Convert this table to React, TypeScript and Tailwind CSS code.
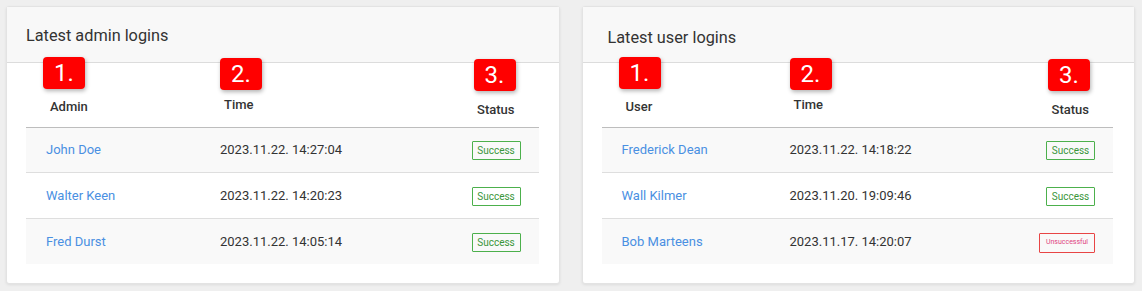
import React from "react";

type Row = { name: string; time: string; ok: boolean };

const adminRows: Row[] = [
  { name: "John Doe", time: "2023.11.22. 14:27:04", ok: true },
  { name: "Walter Keen", time: "2023.11.22. 14:20:23", ok: true },
  { name: "Fred Durst", time: "2023.11.22. 14:05:14", ok: true },
];

const userRows: Row[] = [
  { name: "Frederick Dean", time: "2023.11.22. 14:18:22", ok: true },
  { name: "Wall Kilmer", time: "2023.11.20. 19:09:46", ok: true },
  { name: "Bob Marteens", time: "2023.11.17. 14:20:07", ok: false },
];

function Marker({ n }: { n: number }) {
  return (
    <div className="w-[42px] h-[32px] rounded-[4px] bg-[#ff0000] text-white text-[24px] font-normal leading-none flex items-center justify-center shadow-[1px_2px_4px_rgba(0,0,0,0.3)]">
      {n}.
    </div>
  );
}

function StatusBadge({ ok }: { ok: boolean }) {
  if (ok) {
    return (
      <span className="inline-flex items-center justify-center w-[49px] h-[19px] border border-[#4cb04c] text-[#3a963a] text-[10px] rounded-[1px]">
        Success
      </span>
    );
  }
  return (
    <span className="inline-flex items-center justify-center w-[56px] h-[20px] border border-[#e84545] text-[#e0447f] text-[7px] rounded-[1px]">
      Unsuccessful
    </span>
  );
}

function LoginCard({
  title,
  firstCol,
  rows,
  timeCol,
  titleClass,
  bodyPad,
}: {
  title: string;
  firstCol: string;
  rows: Row[];
  timeCol: string;
  titleClass: string;
  bodyPad: string;
}) {
  return (
    <div className="flex-1 bg-white rounded-[3px] border border-[#e3e3e3] shadow-[0_1px_3px_rgba(0,0,0,0.08)]">
      {/* Header */}
      <div className="h-[56px] bg-[#f8f8f8] border-b border-[#dcdcdc]">
        <h2 className={`text-[16.3px] text-[#333] font-normal ${titleClass}`}>{title}</h2>
      </div>

      <div className={`${bodyPad} pb-5`}>
        {/* Table header */}
        <div className={`grid ${timeCol} h-[65px] border-b border-[#bdbdbd] text-[13px] font-medium text-[#333]`}>
          <div className="relative pl-6 pt-[34px]">
            <div className="absolute left-[17px] -top-[6px]">
              <Marker n={1} />
            </div>
            {firstCol}
          </div>
          <div className="relative pl-1 pt-[32px]">
            <div className="absolute left-0 -top-[5px]">
              <Marker n={2} />
            </div>
            Time
          </div>
          <div className="relative pr-6 pt-[37px] text-right">
            <div className="absolute right-[23px] -top-[4px]">
              <Marker n={3} />
            </div>
            Status
          </div>
        </div>

        {/* Rows */}
        {rows.map((r, i) => (
          <div
            key={r.name}
            className={`grid ${timeCol} items-center text-[13px] ${
              i % 2 === 0 ? "bg-[#f9f9f9]" : "bg-white"
            } ${i > 0 ? "h-[46px] border-t border-[#dedede]" : "h-[44px]"}`}
          >
            <div className="pl-5 text-[#4a90e2]">{r.name}</div>
            <div className="text-[#333]">{r.time}</div>
            <div className="pr-[18px] text-right">
              <StatusBadge ok={r.ok} />
            </div>
          </div>
        ))}
      </div>
    </div>
  );
}

export default function App() {
  return (
    <div
      className="w-[1142px] h-[291px] bg-[#efefef] pl-[6px] pr-[7px] pt-[6px] pb-[7px] flex gap-[22px]"
      style={{ fontFamily: "Roboto, 'Liberation Sans', sans-serif" }}
    >
      <LoginCard
        title="Latest admin logins"
        firstCol="Admin"
        rows={adminRows}
        timeCol="grid-cols-[194px_1fr_auto]"
        titleClass="pl-[19px] pt-[17px]"
        bodyPad="pl-[19px] pr-[20px]"
      />
      <LoginCard
        title="Latest user logins"
        firstCol="User"
        rows={userRows}
        timeCol="grid-cols-[188px_1fr_auto]"
        titleClass="pl-[25px] pt-[19px]"
        bodyPad="pl-[19px] pr-[21px]"
      />
    </div>
  );
}
